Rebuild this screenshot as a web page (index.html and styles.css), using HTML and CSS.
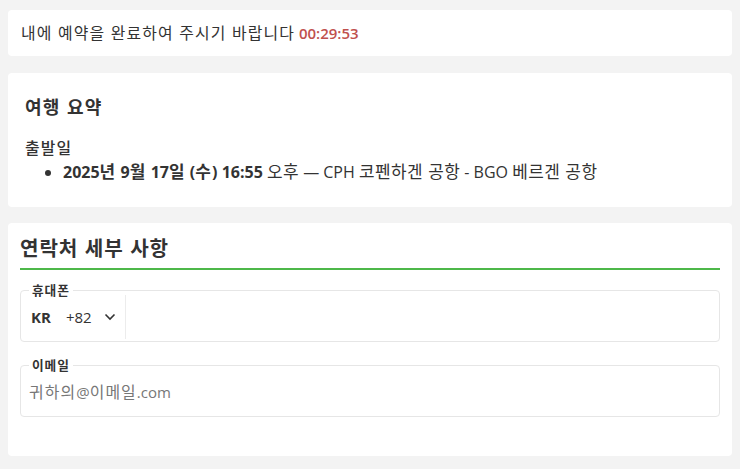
FILE: index.html
```html
<!DOCTYPE html>
<html lang="ko">
<head>
<meta charset="utf-8">
<link rel="stylesheet" href="styles.css">
</head>
<body>
<div class="page">
  <div class="card timer-card">
    <p class="timer-text"><span class="ko">내에 예약을 완료하여 주시기 바랍니다</span> <span class="timer">00:29:53</span></p>
  </div>
  <div class="card summary-card">
    <h2 class="summary-title"><span class="ko">여행 요약</span></h2>
    <div class="dep-label"><span class="ko">출발일</span></div>
    <ul class="dep-list">
      <li><strong>2025<span class="ko">년</span> 9<span class="ko">월</span> 17<span class="ko">일</span> (<span class="ko">수</span>) 16:55</strong> <span class="ko">오후</span> — CPH <span class="ko">코펜하겐 공항</span> - BGO <span class="ko">베르겐 공항</span></li>
    </ul>
  </div>
  <div class="card contact-card">
    <h2 class="contact-title"><span class="ko">연락처 세부 사항</span></h2>
    <fieldset class="field">
      <legend><span class="ko">휴대폰</span></legend>
      <div class="phone-row">
        <div class="country">
          <span class="cc">KR</span>
          <span class="code">+82</span>
          <svg class="chev" width="12" height="8" viewBox="0 0 12 8"><path d="M1.5 1.5 L6 6 L10.5 1.5" fill="none" stroke="#333" stroke-width="1.6"/></svg>
        </div>
        <div class="phone-input"></div>
      </div>
    </fieldset>
    <fieldset class="field">
      <legend><span class="ko">이메일</span></legend>
      <div class="email-row"><span class="ko">귀하의</span>@<span class="ko">이메일</span>.com</div>
    </fieldset>
  </div>
</div>
</body>
</html>
```

FILE: styles.css
```css
* { box-sizing: border-box; }
html, body { margin: 0; padding: 0; }
body {
  background: #f3f3f3;
  font-family: "Open Sans", "Noto Sans CJK KR", sans-serif;
  color: #333;
}
.ko {
  font-family: "Noto Sans CJK KR", sans-serif;
  font-size: 1.06em;
  letter-spacing: 0.07em;
  line-height: 1;
}
.page {
  padding: 10px 8px 0 8px;
  display: flex;
  flex-direction: column;
  gap: 16px;
}
.card {
  background: #fff;
  border-radius: 4px;
}
.timer-card {
  height: 46px;
  padding: 12px 13px 0 13px;
}
.timer-text {
  margin: 0;
  font-size: 15px;
  line-height: 22px;
}
.timer { color: #c0504d; font-weight: 600; }
.summary-card {
  height: 134px;
  margin-top: 1px;
  padding: 23px 17px 0 17px;
}
.summary-title {
  margin: 0;
  font-size: 17px;
  font-weight: 700;
  line-height: 24px;
}
.dep-label {
  margin-top: 17px;
  font-size: 15px;
  line-height: 22px;
  font-weight: 500;
}
.dep-list {
  margin: 2px 0 0 0;
  padding-left: 38px;
  font-size: 16px;
  line-height: 22px;
}
.dep-list .ko { letter-spacing: 0.025em; }
.dep-list strong { font-weight: 700; }
.dep-list strong .ko { letter-spacing: 0.07em; }
.contact-card {
  height: 233px;
  padding: 11px 12px 0 12px;
}
.contact-title {
  margin: 0;
  font-size: 19px;
  font-weight: 700;
  line-height: 30px;
  padding-bottom: 4px;
  border-bottom: 2px solid #4db84a;
}
.contact-title .ko { letter-spacing: 0.045em; }
.field {
  margin: 14px 0 0 0;
  border: 1px solid #e6e6e6;
  border-radius: 4px;
  padding: 0 8px;
  height: 58px;
}
.field + .field { margin-top: 17px; }
.field legend {
  font-size: 12px;
  font-weight: 700;
  padding: 0 3px;
  line-height: 13px;
  color: #333;
}
.phone-row {
  display: flex;
  height: 44px;
  margin-top: -2px;
  margin-left: -8px;
}
.country {
  display: flex;
  align-items: center;
  width: 105px;
  padding-left: 10px;
  border-right: 1px solid #ececec;
  font-size: 15px;
}
.cc { font-weight: 700; }
.code { margin-left: 15px; }
.chev { margin-left: 12px; }
.email-row {
  height: 40px;
  display: flex;
  align-items: center;
  font-size: 15px;
  color: #777;
}
```
